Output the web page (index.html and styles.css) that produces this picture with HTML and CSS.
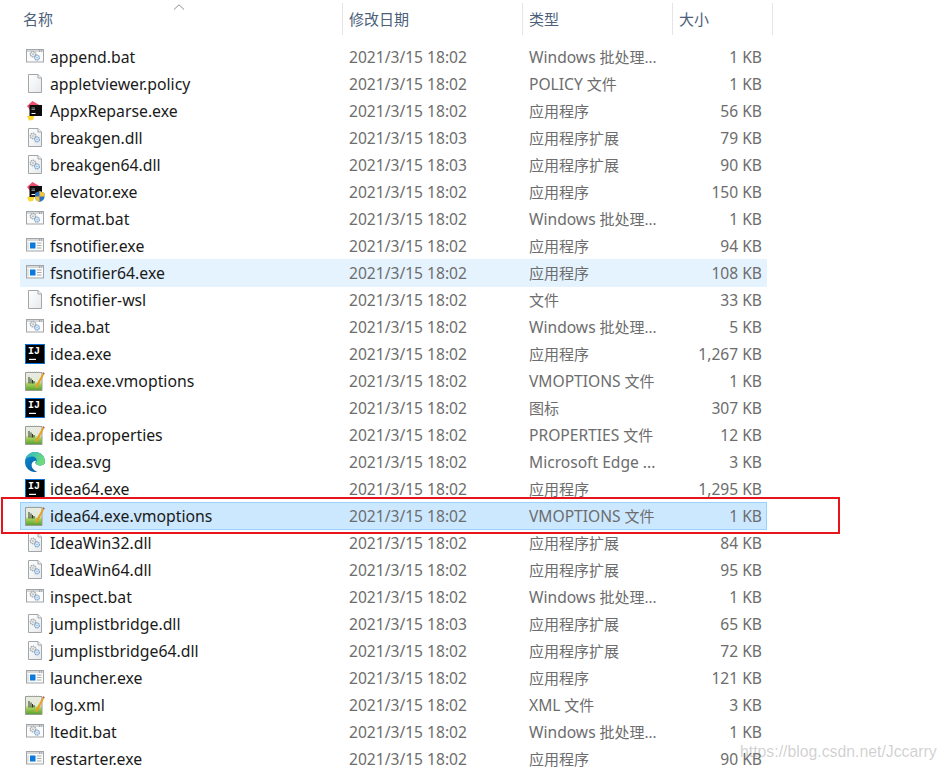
FILE: index.html
```html
<!DOCTYPE html>
<html>
<head>
  <title>bin</title>
  <meta charset="UTF-8">
  <link rel="stylesheet" href="styles.css">
</head>

<body>
  <svg class="sprite" xmlns="http://www.w3.org/2000/svg">
    <defs>
      <linearGradient id="pageFill" x1="0" y1="0" x2="1" y2="1">
        <stop offset="0" stop-color="#ffffff"/>
        <stop offset="1" stop-color="#e6e9ec"/>
      </linearGradient>
      <linearGradient id="noteFill" x1="0" y1="0" x2="0" y2="1">
        <stop offset="0" stop-color="#e9ebe4"/>
        <stop offset="0.5" stop-color="#e2e9d4"/>
        <stop offset="0.64" stop-color="#a6d05a"/>
        <stop offset="1" stop-color="#549f30"/>
      </linearGradient>
      <linearGradient id="edgeFill" x1="0" y1="0" x2="1" y2="1">
        <stop offset="0" stop-color="#0c8fd0"/>
        <stop offset="1" stop-color="#0a4f9c"/>
      </linearGradient>
      <linearGradient id="edgeTop" x1="0" y1="0" x2="1" y2="0.4">
        <stop offset="0" stop-color="#2bb6c8"/>
        <stop offset="1" stop-color="#6fdc7c"/>
      </linearGradient>
      <symbol id="gears" viewBox="0 0 20 20">
        <circle cx="8" cy="8.4" r="2.7" fill="#eceeef" stroke="#a4a8ac" stroke-width="1.4" stroke-dasharray="1.4 .6"/>
        <circle cx="8" cy="8.4" r="0.8" fill="#a4a8ac"/>
        <circle cx="12" cy="11.8" r="2.4" fill="#e6eff7" stroke="#7fa9d2" stroke-width="1.3" stroke-dasharray="1.4 .5"/>
        <circle cx="12" cy="11.8" r="0.7" fill="#7fa9d2"/>
      </symbol>
      <symbol id="i-page" viewBox="0 0 20 20">
        <path d="M3.5 .5H13L16.5 4V18.5H3.5Z" fill="url(#pageFill)" stroke="#a3a6a9"/>
        <path d="M13 .5V4H16.5" fill="#f4f5f6" stroke="#a3a6a9"/>
      </symbol>
      <symbol id="i-dll" viewBox="0 0 20 20">
        <use href="#i-page"/>
        <use href="#gears" transform="translate(0 -.4)"/>
      </symbol>
      <symbol id="i-win" viewBox="0 0 20 20">
        <rect x="1.5" y="2.5" width="17" height="12.5" fill="#fbfbfb" stroke="#a2a5a8"/>
        <rect x="2" y="3" width="16" height="2" fill="#d5d8db"/>
        <path d="M14 4H15M15.8 4H16.8" stroke="#777" stroke-width="1"/>
      </symbol>
      <symbol id="i-bat" viewBox="0 0 20 20">
        <use href="#i-win"/>
        <use href="#gears" transform="translate(0 -1.2)"/>
      </symbol>
      <symbol id="i-exe" viewBox="0 0 20 20">
        <use href="#i-win"/>
        <rect x="5" y="6.5" width="5.5" height="6" fill="#0a78dc"/>
        <path d="M12 7H16.5M12 9.5H16.5M12 12H16.5" stroke="#a9acaf"/>
        <path d="M3 6V13.5" stroke="#c9ccd0"/>
      </symbol>
      <symbol id="i-ij" viewBox="0 0 20 20">
        <rect x=".5" y=".5" width="19" height="19" fill="#000" stroke="#0b6fd8"/>
        <text x="3" y="10.4" class="ij-text">IJ</text>
        <rect x="4" y="14.8" width="7" height="1.2" fill="#fff"/>
      </symbol>
      <symbol id="i-note" viewBox="0 0 20 20">
        <path d="M.5 1.5H17V19.5H.5Z" fill="url(#noteFill)" stroke="#9b9e92"/>
        <path d="M3 1.2H14" stroke="#a9ac9f" stroke-dasharray="1 1"/>
        <path d="M4 6V12.5M6 7.5V12.5M7.5 9V12.5M9 10V12.5" stroke="#2a3a1c" stroke-width="1"/>
        <path d="M10.5 15L17.6 2.4L19.2 3.2L12.6 16.2L10.4 17Z" fill="#e8a126"/>
        <path d="M17.6 2.4L18.2 1.2L19.8 2.2L19.2 3.2Z" fill="#a8483a"/>
      </symbol>
      <symbol id="i-edge" viewBox="0 0 20 20">
        <path d="M10 0C15.5 0 20 4 20 9.4C20 12.4 17.4 13.4 15 13.4C12.8 13.4 10.8 12.6 10.4 11C10.2 10 10.8 9.2 11.4 8.8C9 8.4 6.6 10.4 6.6 13C6.6 16 9 18.8 12.6 19.6C11.6 19.9 10.8 20 10 20C4.4 20 0 15.6 0 10C0 4.4 4.4 0 10 0Z" fill="url(#edgeFill)"/>
        <path d="M1 7C2.4 2.8 6 0 10 0C15.5 0 20 4 20 9.4C20 12.4 17.4 13.4 15 13.4C12.8 13.4 10.8 12.6 10.4 11C10.4 10.4 11.4 9.8 11.8 8.6C11.8 6.4 9.8 4.6 7 4.6C4.6 4.6 2.4 5.6 1 7Z" fill="url(#edgeTop)"/>
      </symbol>
      <symbol id="i-jb" viewBox="0 0 20 20">
        <path d="M2 5L7.5 0L16 5L15 9L5 9Z" fill="#ef4f6f"/>
        <path d="M2 15L10 13L8 19L4 19.5Z" fill="#fbd92f"/>
        <rect x="4.5" y="4" width="12.5" height="11" fill="#0c0c0c"/>
        <path d="M6.5 12.5H10.5" stroke="#fff"/>
        <path d="M6.5 7H10M6.5 8.5H10" stroke="#8a8a8a"/>
      </symbol>
      <symbol id="i-jbshield" viewBox="0 0 20 20">
        <use href="#i-jb"/>
        <path d="M10 11L14.5 9L19.5 11V15C19.5 17.5 17 19.3 14.5 20C12 19.3 10 17.5 10 15Z" fill="#2b6fc6"/>
        <path d="M14.5 9L19.5 11V14.5H14.5ZM10 14.5H14.5V20C12 19.3 10 17.5 10 15Z" fill="#f3c53a"/>
      </symbol>
    </defs>
  </svg>

  <div class="head">
    <div class="head-cell head-name">名称
      <svg class="sort-arrow" width="12" height="6" viewBox="0 0 12 6"><path d="M1 5.5L6 .8L11 5.5" fill="none" stroke="#8a8f96"/></svg>
    </div>
    <div class="head-cell">修改日期</div>
    <div class="head-cell">类型</div>
    <div class="head-cell">大小</div>
    <div class="head-cell head-end"></div>
  </div>

  <div class="list">
    <div class="row"><span class="name"><svg class="icon"><use href="#i-bat"/></svg>append.bat</span><span class="date">2021/3/15 18:02</span><span class="type"><span class="lat">Windows</span> 批处理...</span><span class="size">1 KB</span></div>
    <div class="row"><span class="name"><svg class="icon"><use href="#i-page"/></svg>appletviewer.policy</span><span class="date">2021/3/15 18:02</span><span class="type"><span class="lat">POLICY</span> 文件</span><span class="size">1 KB</span></div>
    <div class="row"><span class="name"><svg class="icon"><use href="#i-jb"/></svg>AppxReparse.exe</span><span class="date">2021/3/15 18:02</span><span class="type">应用程序</span><span class="size">56 KB</span></div>
    <div class="row"><span class="name"><svg class="icon"><use href="#i-dll"/></svg>breakgen.dll</span><span class="date">2021/3/15 18:03</span><span class="type">应用程序扩展</span><span class="size">79 KB</span></div>
    <div class="row"><span class="name"><svg class="icon"><use href="#i-dll"/></svg>breakgen64.dll</span><span class="date">2021/3/15 18:03</span><span class="type">应用程序扩展</span><span class="size">90 KB</span></div>
    <div class="row"><span class="name"><svg class="icon"><use href="#i-jbshield"/></svg>elevator.exe</span><span class="date">2021/3/15 18:02</span><span class="type">应用程序</span><span class="size">150 KB</span></div>
    <div class="row"><span class="name"><svg class="icon"><use href="#i-bat"/></svg>format.bat</span><span class="date">2021/3/15 18:02</span><span class="type"><span class="lat">Windows</span> 批处理...</span><span class="size">1 KB</span></div>
    <div class="row"><span class="name"><svg class="icon"><use href="#i-exe"/></svg>fsnotifier.exe</span><span class="date">2021/3/15 18:02</span><span class="type">应用程序</span><span class="size">94 KB</span></div>
    <div class="row row-hover"><span class="name"><svg class="icon"><use href="#i-exe"/></svg>fsnotifier64.exe</span><span class="date">2021/3/15 18:02</span><span class="type">应用程序</span><span class="size">108 KB</span></div>
    <div class="row"><span class="name"><svg class="icon"><use href="#i-page"/></svg>fsnotifier-wsl</span><span class="date">2021/3/15 18:02</span><span class="type">文件</span><span class="size">33 KB</span></div>
    <div class="row"><span class="name"><svg class="icon"><use href="#i-bat"/></svg>idea.bat</span><span class="date">2021/3/15 18:02</span><span class="type"><span class="lat">Windows</span> 批处理...</span><span class="size">5 KB</span></div>
    <div class="row"><span class="name"><svg class="icon"><use href="#i-ij"/></svg>idea.exe</span><span class="date">2021/3/15 18:02</span><span class="type">应用程序</span><span class="size">1,267 KB</span></div>
    <div class="row"><span class="name"><svg class="icon"><use href="#i-note"/></svg>idea.exe.vmoptions</span><span class="date">2021/3/15 18:02</span><span class="type"><span class="lat">VMOPTIONS</span> 文件</span><span class="size">1 KB</span></div>
    <div class="row"><span class="name"><svg class="icon"><use href="#i-ij"/></svg>idea.ico</span><span class="date">2021/3/15 18:02</span><span class="type">图标</span><span class="size">307 KB</span></div>
    <div class="row"><span class="name"><svg class="icon"><use href="#i-note"/></svg>idea.properties</span><span class="date">2021/3/15 18:02</span><span class="type"><span class="lat">PROPERTIES</span> 文件</span><span class="size">12 KB</span></div>
    <div class="row"><span class="name"><svg class="icon"><use href="#i-edge"/></svg>idea.svg</span><span class="date">2021/3/15 18:02</span><span class="type"><span class="lat">Microsoft Edge ...</span></span><span class="size">3 KB</span></div>
    <div class="row"><span class="name"><svg class="icon"><use href="#i-ij"/></svg>idea64.exe</span><span class="date">2021/3/15 18:02</span><span class="type">应用程序</span><span class="size">1,295 KB</span></div>
    <div class="row row-selected"><span class="name"><svg class="icon"><use href="#i-note"/></svg>idea64.exe.vmoptions</span><span class="date">2021/3/15 18:02</span><span class="type"><span class="lat">VMOPTIONS</span> 文件</span><span class="size">1 KB</span></div>
    <div class="row"><span class="name"><svg class="icon"><use href="#i-dll"/></svg>IdeaWin32.dll</span><span class="date">2021/3/15 18:02</span><span class="type">应用程序扩展</span><span class="size">84 KB</span></div>
    <div class="row"><span class="name"><svg class="icon"><use href="#i-dll"/></svg>IdeaWin64.dll</span><span class="date">2021/3/15 18:02</span><span class="type">应用程序扩展</span><span class="size">95 KB</span></div>
    <div class="row"><span class="name"><svg class="icon"><use href="#i-bat"/></svg>inspect.bat</span><span class="date">2021/3/15 18:02</span><span class="type"><span class="lat">Windows</span> 批处理...</span><span class="size">1 KB</span></div>
    <div class="row"><span class="name"><svg class="icon"><use href="#i-dll"/></svg>jumplistbridge.dll</span><span class="date">2021/3/15 18:03</span><span class="type">应用程序扩展</span><span class="size">65 KB</span></div>
    <div class="row"><span class="name"><svg class="icon"><use href="#i-dll"/></svg>jumplistbridge64.dll</span><span class="date">2021/3/15 18:02</span><span class="type">应用程序扩展</span><span class="size">72 KB</span></div>
    <div class="row"><span class="name"><svg class="icon"><use href="#i-exe"/></svg>launcher.exe</span><span class="date">2021/3/15 18:02</span><span class="type">应用程序</span><span class="size">121 KB</span></div>
    <div class="row"><span class="name"><svg class="icon"><use href="#i-note"/></svg>log.xml</span><span class="date">2021/3/15 18:02</span><span class="type"><span class="lat">XML</span> 文件</span><span class="size">3 KB</span></div>
    <div class="row"><span class="name"><svg class="icon"><use href="#i-bat"/></svg>ltedit.bat</span><span class="date">2021/3/15 18:02</span><span class="type"><span class="lat">Windows</span> 批处理...</span><span class="size">1 KB</span></div>
    <div class="row"><span class="name"><svg class="icon"><use href="#i-exe"/></svg>restarter.exe</span><span class="date">2021/3/15 18:02</span><span class="type">应用程序</span><span class="size">90 KB</span></div>
  </div>

  <div class="red-box"></div>
  <div class="watermark">https://blog.csdn.net/Jccarry</div>
</body>
</html>
```

FILE: styles.css
```css
html, body {
  margin: 0;
  height: 771px;
  overflow: hidden;
}
body {
  position: relative;
  background-color: #fff;
  color: #6d6d6d;
  font-family: "Noto Sans", "Noto Sans CJK SC", sans-serif;
  font-size: 15px;
}
.sprite {
  display: block;
  width: 0;
  height: 0;
}
.ij-text {
  font-family: "Liberation Mono", monospace;
  font-weight: bold;
  font-size: 10px;
  fill: #fff;
}

/* column header */
.head {
  display: grid;
  grid-template-columns: 342px 180px 150px 100px 1px;
  height: 32px;
  margin-top: 3px;
  color: #4c607a;
  font-family: "Noto Sans CJK SC", sans-serif;
}
.head-cell {
  display: flex;
  align-items: center;
  padding-left: 6px;
  padding-bottom: 2px;
  border-left: 1px solid #e5e5e5;
}
.head-name {
  position: relative;
  padding-left: 23px;
  border-left: none;
}
.head-end {
  padding: 0;
}
.sort-arrow {
  position: absolute;
  left: 173px;
  top: 1px;
}

/* file rows */
.list {
  width: 747px;
  margin-left: 20px;
  padding-top: 9px;
}
.row {
  display: grid;
  grid-template-columns: 324px 180px 140px 93px;
  align-items: center;
  box-sizing: border-box;
  height: 28px;
  margin-top: -1px;
  padding-left: 5px;
  white-space: nowrap;
}
.row-hover {
  background-color: #e5f3ff;
}
.row-selected {
  background-color: #cce8ff;
  box-shadow: inset 0 0 0 1px #99d1ff;
}
.name {
  display: flex;
  align-items: center;
  gap: 5px;
  color: #1a1a1a;
  font-size: 15.8px;
}
.icon {
  width: 20px;
  height: 20px;
  flex: none;
}
.date, .size, .lat {
  font-size: 15.6px;
}
.type {
  padding-bottom: 2px;
}
.type:has(.lat) {
  padding-bottom: 0;
}
.size {
  text-align: right;
}

/* annotation drawn over the screenshot */
.red-box {
  position: absolute;
  left: 1px;
  top: 497px;
  width: 835px;
  height: 33px;
  border: 2px solid #e8141c;
}
.watermark {
  position: absolute;
  left: 740px;
  top: 743px;
  font-family: "Liberation Sans", sans-serif;
  font-size: 15.8px;
  color: rgba(120, 120, 120, 0.35);
}
```
